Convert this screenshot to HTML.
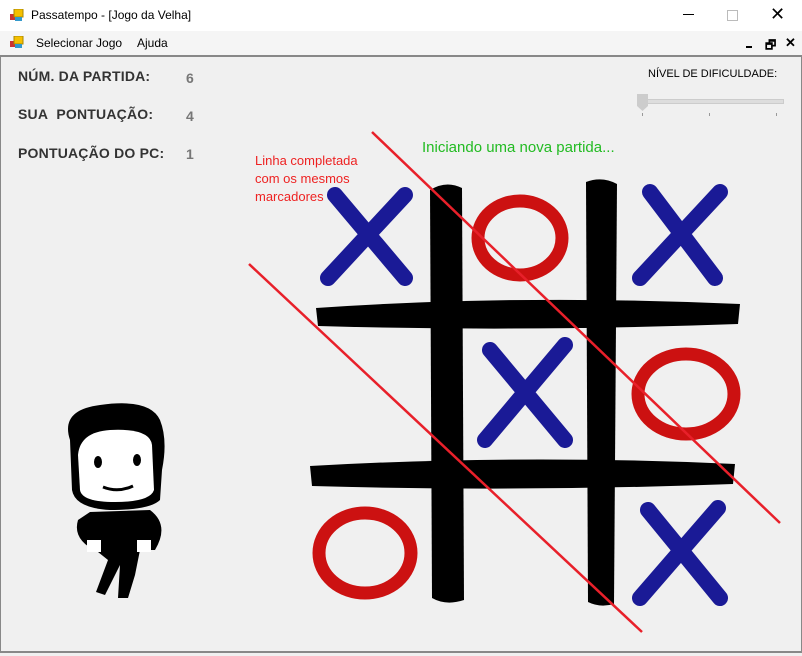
<!DOCTYPE html>
<html><head><meta charset="utf-8"><style>
body{margin:0;width:802px;height:656px;background:#f0f0f0;font-family:"Liberation Sans",sans-serif;position:relative;overflow:hidden}
.t{position:absolute;white-space:nowrap}
.lbl{font-weight:bold;font-size:14px;color:#333}
.num{font-weight:bold;font-size:14px;color:#777}
</style></head><body>
<div style="position:absolute;left:0;top:0;width:802px;height:31px;background:#fff"></div>
<svg class="t" style="left:10px;top:9px" width="14" height="13"><rect x="0" y="5" width="6" height="6" fill="#c33"/><rect x="4" y="0" width="9" height="8" fill="#f5c000" stroke="#a80" stroke-width="1"/><rect x="5" y="8" width="7" height="4" fill="#39c"/></svg>
<div class="t" style="left:31px;top:8px;font-size:12px;color:#000">Passatempo - [Jogo da Velha]</div>
<div class="t" style="left:683px;top:14px;width:11px;height:1px;background:#000"></div>
<div class="t" style="left:727px;top:10px;width:9px;height:9px;border:1px solid #bbb"></div>
<div class="t" style="left:770px;top:4px;font-size:18px;color:#000">✕</div>
<div style="position:absolute;left:0;top:31px;width:802px;height:24px;background:#f5f5f5"></div>
<svg class="t" style="left:10px;top:36px" width="14" height="13"><rect x="0" y="5" width="6" height="6" fill="#c33"/><rect x="4" y="0" width="9" height="8" fill="#f5c000" stroke="#a80" stroke-width="1"/><rect x="5" y="8" width="7" height="4" fill="#39c"/></svg>
<div class="t" style="left:36px;top:36px;font-size:12px">Selecionar Jogo</div>
<div class="t" style="left:137px;top:36px;font-size:12px">Ajuda</div>
<div class="t" style="left:746px;top:46px;width:6px;height:2px;background:#000"></div>
<div class="t" style="left:765px;top:36px;font-size:12px;font-weight:bold">🗗</div>
<div class="t" style="left:785px;top:35px;font-size:13px;font-weight:bold">✕</div>
<div style="position:absolute;left:0;top:55px;width:800px;height:594px;border:1px solid #888;border-width:2px 1px 2px 1px"></div>
<div class="t lbl" style="left:18px;top:68px;letter-spacing:0.2px">NÚM. DA PARTIDA:</div><div class="t num" style="left:186px;top:70px">6</div>
<div class="t lbl" style="left:18px;top:106px;letter-spacing:0.2px">SUA&nbsp; PONTUAÇÃO:</div><div class="t num" style="left:186px;top:108px">4</div>
<div class="t lbl" style="left:18px;top:145px;letter-spacing:0.2px">PONTUAÇÃO DO PC:</div><div class="t num" style="left:186px;top:146px">1</div>
<div class="t" style="left:648px;top:68px;font-size:11px;color:#000">NÍVEL DE DIFICULDADE:</div>
<div class="t" style="left:642px;top:99px;width:140px;height:3px;background:#ddd;border:1px solid #ccc"></div>
<svg class="t" style="left:636px;top:93px" width="14" height="20"><path d="M1 1H12V13L6.5 18L1 13Z" fill="#ccc"/></svg>
<div class="t" style="left:642px;top:113px;width:1px;height:3px;background:#999"></div>
<div class="t" style="left:709px;top:113px;width:1px;height:3px;background:#999"></div>
<div class="t" style="left:776px;top:113px;width:1px;height:3px;background:#999"></div>
<div class="t" style="left:422px;top:139px;font-size:15px;color:#22bb22">Iniciando uma nova partida...</div>
<div class="t" style="left:255px;top:152px;font-size:13px;color:#e22;line-height:18px">Linha completada<br>com os mesmos<br>marcadores</div>
<svg class="t" style="left:0;top:0" width="802" height="656">
<g fill="#000">
<path d="M430 190 Q446 180 462 188 L464 600 Q446 606 432 598 Z"/>
<path d="M586 182 Q602 176 617 184 L614 604 Q600 608 588 602 Z"/>
<path d="M316 308 Q520 294 740 304 L738 324 Q520 332 318 326 Z"/>
<path d="M310 466 Q520 454 735 464 L733 484 Q520 492 312 486 Z"/>
</g>
<g stroke="#1a1a96" stroke-width="16" stroke-linecap="round" fill="none">
<path d="M335 195 L405 278 M405 195 L328 278"/>
<path d="M650 192 L715 278 M720 192 L640 278"/>
<path d="M490 350 L565 440 M565 345 L485 440"/>
<path d="M648 510 L720 598 M718 508 L640 598"/>
</g>
<g stroke="#cc1111" stroke-width="13" fill="none">
<ellipse cx="520" cy="238" rx="42" ry="37"/>
<ellipse cx="686" cy="394" rx="48" ry="40"/>
<ellipse cx="365" cy="553" rx="46" ry="40"/>
</g>
<g stroke="#e8202a" stroke-width="2.5">
<line x1="372" y1="132" x2="780" y2="523"/>
<line x1="249" y1="264" x2="642" y2="632"/>
</g>
<g>
<path d="M70 440 Q60 410 100 405 Q150 398 160 420 Q168 440 162 470 L160 500 Q150 510 110 510 Q75 508 72 490 Z" fill="#000"/>
<path d="M78 455 Q80 432 110 430 Q150 428 152 445 L154 490 Q150 502 115 502 Q82 502 80 490 Z" fill="#fff"/>
<ellipse cx="98" cy="462" rx="4" ry="6" fill="#000"/><ellipse cx="137" cy="460" rx="4" ry="6" fill="#000"/>
<path d="M103 487 Q118 493 133 486" stroke="#000" stroke-width="3" fill="none"/>
<path d="M90 512 L150 510 Q170 525 155 550 L140 550 L135 575 L128 598 L118 598 L120 565 L105 595 L96 592 L108 560 L98 552 Q72 540 78 520 Z" fill="#000"/>
<rect x="87" y="540" width="14" height="12" fill="#fff"/>
<rect x="137" y="540" width="14" height="12" fill="#fff"/>
</g>
</svg>
</body></html>
